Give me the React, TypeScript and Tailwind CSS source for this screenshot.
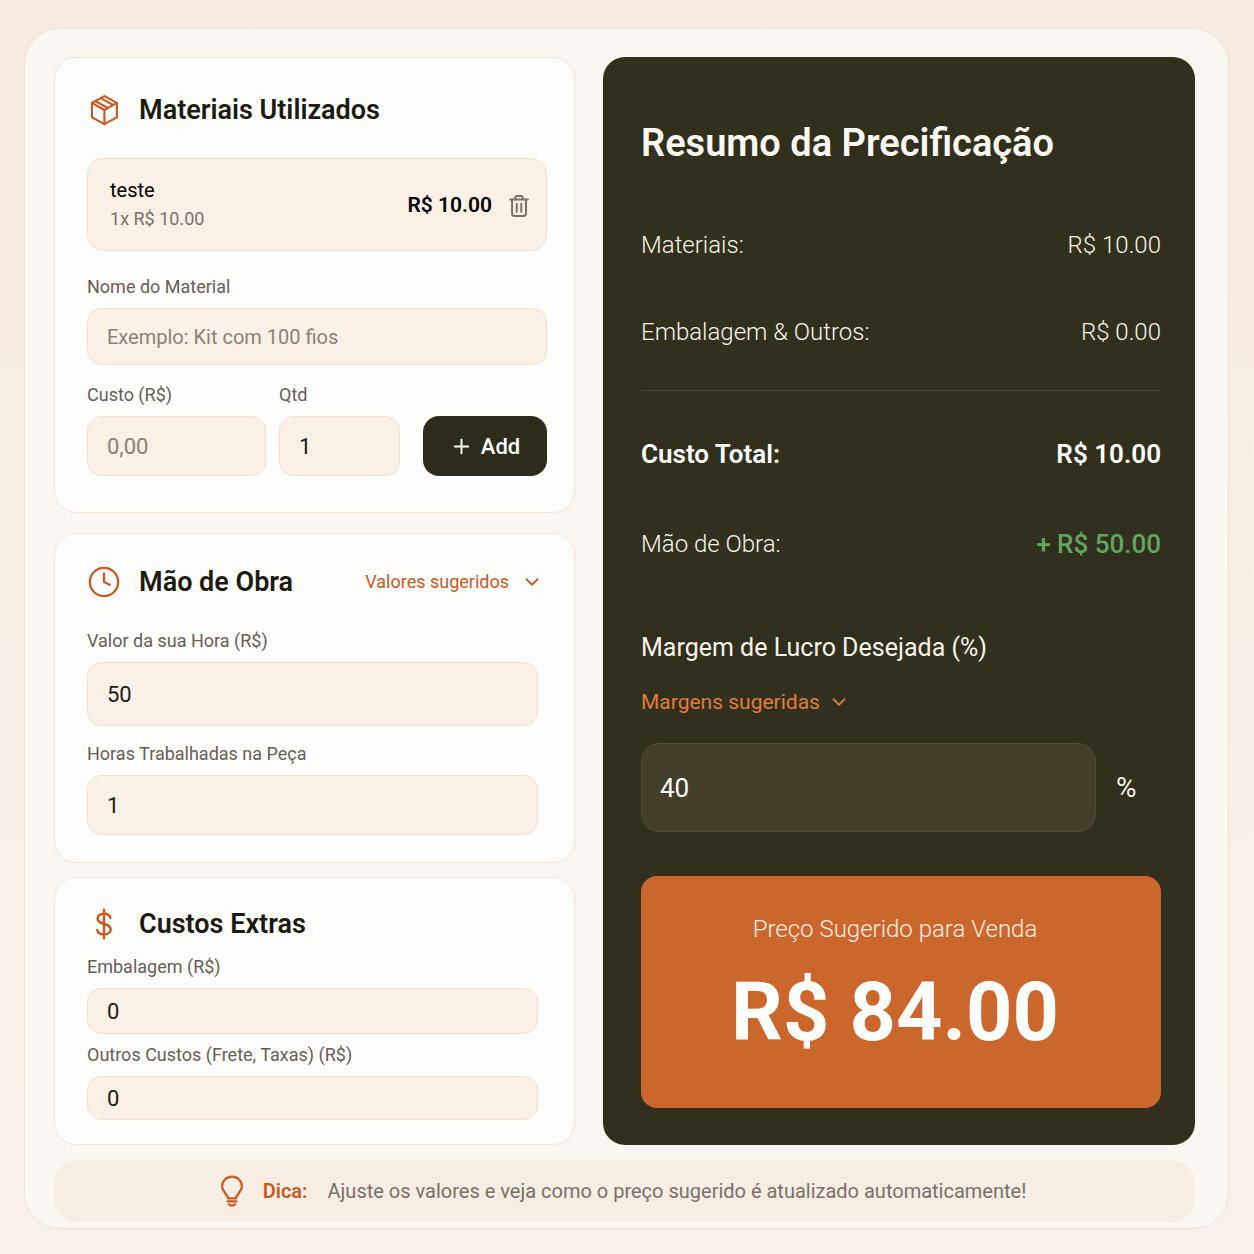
import { useId, useState, type ReactNode } from "react";
import { ChevronDown, Clock, Plus } from "lucide-react";

type Material = { id: number; name: string; cost: number; qty: number };

const money = (value: number) => `R$ ${value.toFixed(2)}`;

export default function App() {
  const [materials, setMaterials] = useState<Material[]>([
    { id: 1, name: "teste", cost: 10, qty: 1 },
  ]);
  const [name, setName] = useState("");
  const [cost, setCost] = useState("");
  const [qty, setQty] = useState("1");
  const [hourRate, setHourRate] = useState("50");
  const [hours, setHours] = useState("1");
  const [packaging, setPackaging] = useState("0");
  const [others, setOthers] = useState("0");
  const [margin, setMargin] = useState("40");

  const toNumber = (value: string) => Number(value.replace(",", ".")) || 0;

  const materialsTotal = materials.reduce((sum, m) => sum + m.cost * m.qty, 0);
  const extras = toNumber(packaging) + toNumber(others);
  const totalCost = materialsTotal + extras;
  const labor = toNumber(hourRate) * toNumber(hours);
  const price = (totalCost + labor) * (1 + toNumber(margin) / 100);

  const handleAdd = () => {
    if (!name.trim()) return;
    setMaterials([...materials, { id: Date.now(), name, cost: toNumber(cost), qty: toNumber(qty) }]);
    setName("");
    setCost("");
    setQty("1");
  };

  return (
    <div className="min-h-screen bg-gradient-to-b from-[#f5ebe2] to-[#f8f0ea] pt-7 pr-[25px] pb-[25px] pl-6 font-[Roboto,sans-serif] text-[#1b1b12]">
      <main className="rounded-[36px] border border-[#efe3d9] bg-[#faf6f2] pt-7 pr-[33px] pb-[6px] pl-[29px]">
        <div className="grid grid-cols-[521fr_592fr] gap-7">
          <div className="flex flex-col">
            {/* Materials */}
            <Card className="pt-[34px] pb-9">
              <CardTitle icon={<BoxIcon />}>Materiais Utilizados</CardTitle>
              <ul className="mt-[30px] flex flex-col gap-2">
                {materials.map((m) => (
                  <li
                    key={m.id}
                    className="flex items-center justify-between rounded-2xl border border-[#f1e2d3] bg-[#f9f1e8] pt-4 pr-[14px] pb-[17px] pl-[22px]"
                  >
                    <div>
                      <p className="text-xl leading-[30px] text-black">{m.name}</p>
                      <p className="text-lg leading-7 text-[#7b7067]">{m.qty}x {money(m.cost)}</p>
                    </div>
                    <div className="flex items-center gap-[14px] pt-1">
                      <span className="text-[21px] font-semibold text-black">{money(m.cost * m.qty)}</span>
                      <button
                        aria-label={`Remover ${m.name}`}
                        onClick={() => setMaterials(materials.filter((x) => x.id !== m.id))}
                        className="text-[#7b7067]"
                      >
                        <TrashIcon />
                      </button>
                    </div>
                  </li>
                ))}
              </ul>
              <Field
                label="Nome do Material"
                value={name}
                onChange={setName}
                placeholder="Exemplo: Kit com 100 fios"
                className="mt-[22px]"
                inputClassName="h-[57px] text-xl"
              />
              <div className="mt-4 flex items-end">
                <Field
                  label="Custo (R$)"
                  value={cost}
                  onChange={setCost}
                  placeholder="0,00"
                  className="mr-[13px] flex-[179]"
                  inputClassName="h-[60px] text-[22px]"
                />
                <Field
                  label="Qtd"
                  value={qty}
                  onChange={setQty}
                  className="mr-[23px] flex-[121]"
                  inputClassName="h-[60px] text-[22px]"
                />
                <button
                  onClick={handleAdd}
                  className="flex h-[60px] flex-[124] items-center justify-center gap-2 rounded-2xl bg-[#2d2c1c] text-[22px] font-medium text-white"
                >
                  <Plus size={23} strokeWidth={2} />
                  Add
                </button>
              </div>
            </Card>

            {/* Labor */}
            <Card className="mt-5 pt-[30px] pb-[27px]">
              <div className="flex items-center justify-between">
                <CardTitle icon={<Clock size={34} strokeWidth={1.6} />}>Mão de Obra</CardTitle>
                <button className="mr-1 flex items-center gap-3 text-lg text-[#c75a22]">
                  Valores sugeridos
                  <ChevronDown size={22} strokeWidth={2} />
                </button>
              </div>
              <Field
                label="Valor da sua Hora (R$)"
                value={hourRate}
                onChange={setHourRate}
                className="mt-[27px] mr-[9px]"
                inputClassName="h-16 text-[22px]"
              />
              <Field
                label="Horas Trabalhadas na Peça"
                value={hours}
                onChange={setHours}
                className="mt-[14px] mr-[9px]"
                inputClassName="h-[60px] text-[22px]"
              />
            </Card>

            {/* Extra costs */}
            <Card className="mt-[14px] pt-7 pb-6">
              <CardTitle icon={<DollarIcon />}>Custos Extras</CardTitle>
              <Field
                label="Embalagem (R$)"
                value={packaging}
                onChange={setPackaging}
                className="mt-[11px] mr-[9px]"
                inputClassName="h-[46px] text-[22px]"
              />
              <Field
                label="Outros Custos (Frete, Taxas) (R$)"
                value={others}
                onChange={setOthers}
                className="mt-[7px] mr-[9px]"
                inputClassName="h-[44px] text-[22px]"
              />
            </Card>
          </div>

          {/* Summary */}
          <section className="rounded-[22px] bg-[#31301f] pt-[61px] pr-[34px] pb-[36px] pl-[38px] text-[#f7f3ec]">
            <h2 className="text-[38px] leading-[50px] font-semibold text-[#fbf8f4]">Resumo da Precificação</h2>
            <dl className="text-2xl leading-9 font-[350]">
              <SummaryRow label="Materiais:" value={money(materialsTotal)} className="mt-[59px]" />
              <SummaryRow label="Embalagem & Outros:" value={money(extras)} className="mt-[51px] border-b border-[#49473a] pb-10" />
              <SummaryRow label="Custo Total:" value={money(totalCost)} className="mt-[45px] text-[26px] font-semibold text-white" />
              <div className="mt-[54px] flex justify-between">
                <dt>Mão de Obra:</dt>
                <dd className="text-[26px] font-medium text-[#62a65c]">+ {money(labor)}</dd>
              </div>
            </dl>
            <label htmlFor="margin" className="mt-[68px] block text-[25px] leading-9">
              Margem de Lucro Desejada (%)
            </label>
            <button className="mt-5 flex items-center gap-2 text-[21px] leading-8 text-[#e07b3c]">
              Margens sugeridas
              <ChevronDown size={22} strokeWidth={2} />
            </button>
            <div className="mt-[25px] flex items-center">
              <input
                id="margin"
                inputMode="decimal"
                value={margin}
                onChange={(e) => setMargin(e.target.value)}
                className="h-[89px] min-w-0 flex-1 rounded-[18px] border border-[#4d4a37] bg-[#423e2b] px-[18px] text-[26px] text-white outline-none focus:border-[#cb672c]"
              />
              <span className="w-[65px] pl-5 text-[28px]">%</span>
            </div>
            <div className="mt-11 rounded-2xl bg-[#cb672c] pt-[35px] pr-3 pb-[45px] text-center text-white">
              <p className="text-2xl leading-9 font-[350] text-[#fdf0e2]">Preço Sugerido para Venda</p>
              <p className="mt-4 text-[81px] leading-[100px] font-bold">{money(price)}</p>
            </div>
          </section>
        </div>

        {/* Tip */}
        <aside className="mt-[15px] flex h-[62px] items-center justify-center rounded-3xl bg-[#f6ede5] pr-2 text-xl text-[#78716a]">
          <BulbIcon />
          <strong className="mr-5 ml-[14px] font-semibold text-[#c75a22]">Dica:</strong>
          <p>Ajuste os valores e veja como o preço sugerido é atualizado automaticamente!</p>
        </aside>
      </main>
    </div>
  );
}

function Card({ className, children }: { className: string; children: ReactNode }) {
  return (
    <section className={`rounded-[22px] border border-[#f3e7dc] bg-[#fdfdfc] pr-[27px] pl-8 ${className}`}>
      {children}
    </section>
  );
}

function CardTitle({ icon, children }: { icon: ReactNode; children: ReactNode }) {
  return (
    <h2 className="flex items-center gap-[18px] text-[27px] leading-9 font-semibold">
      <span className="text-[#c75a22]">{icon}</span>
      {children}
    </h2>
  );
}

function Field({ label, value, onChange, placeholder, className, inputClassName }: {
  label: string;
  value: string;
  onChange: (value: string) => void;
  placeholder?: string;
  className: string;
  inputClassName: string;
}) {
  const id = useId();
  return (
    <div className={`min-w-0 ${className}`}>
      <label htmlFor={id} className="mb-[7px] block text-lg leading-7 text-[#665e57]">{label}</label>
      <input
        id={id}
        value={value}
        placeholder={placeholder}
        onChange={(e) => onChange(e.target.value)}
        className={`block w-full rounded-[14px] border border-[#f1e2d3] bg-[#f9f1e8] px-[19px] text-[#1b1b12] outline-none placeholder:text-[#8b8178] focus:border-[#cb672c] ${inputClassName}`}
      />
    </div>
  );
}

function SummaryRow({ label, value, className }: { label: string; value: string; className: string }) {
  return (
    <div className={`flex justify-between ${className}`}>
      <dt>{label}</dt>
      <dd>{value}</dd>
    </div>
  );
}

function Icon({ size, strokeWidth, children }: { size: number; strokeWidth: number; children: ReactNode }) {
  return (
    <svg
      width={size}
      height={size}
      viewBox="0 0 24 24"
      fill="none"
      stroke="currentColor"
      strokeWidth={strokeWidth}
      strokeLinecap="round"
      strokeLinejoin="round"
      aria-hidden="true"
    >
      {children}
    </svg>
  );
}

function BoxIcon() {
  return (
    <Icon size={34} strokeWidth={1.5}>
      <path d="M12.3 2.2 21.1 7v10.2L12.3 22l-8.8-4.8V7z" />
      <path d="M3.5 7l8.8 5 8.8-5M12.3 12v10M5.9 5.7l8.8 4.9M9.7 3.6l8.8 4.9" />
    </Icon>
  );
}

function DollarIcon() {
  return (
    <Icon size={34} strokeWidth={1.75}>
      <path d="M12 2v20" />
      <path d="M16.5 7.6C16.1 5.7 14.3 4.7 12 4.7 9.3 4.7 7.5 6.1 7.5 8.2c0 2.3 2 3.1 4.5 3.8 2.8.7 4.7 1.5 4.7 3.8 0 2.2-2.1 3.5-4.7 3.5-2.5 0-4.4-1.1-4.8-3.1" />
    </Icon>
  );
}

function TrashIcon() {
  return (
    <Icon size={26} strokeWidth={1.8}>
      <path d="M3.8 6h16.4M8.6 6V4.2c0-.9.6-1.5 1.5-1.5h3.8c.9 0 1.5.6 1.5 1.5V6" />
      <path d="M5.6 6v13.2c0 1.2.8 2 2 2h8.8c1.2 0 2-.8 2-2V6M9.9 10v7.4M14.1 10v7.4" />
    </Icon>
  );
}

function BulbIcon() {
  return (
    <span className="text-[#c75a22]">
      <Icon size={34} strokeWidth={1.6}>
        <path d="M9.1 17.2C9.1 14 5 13 5 8.8a7 7 0 0 1 14 0c0 4.2-4.1 5.2-4.1 8.4z" />
        <path d="M8.8 19.3h6.4M9.8 21.3c.6.8 1.3 1.1 2.2 1.1s1.6-.3 2.2-1.1" />
      </Icon>
    </span>
  );
}
